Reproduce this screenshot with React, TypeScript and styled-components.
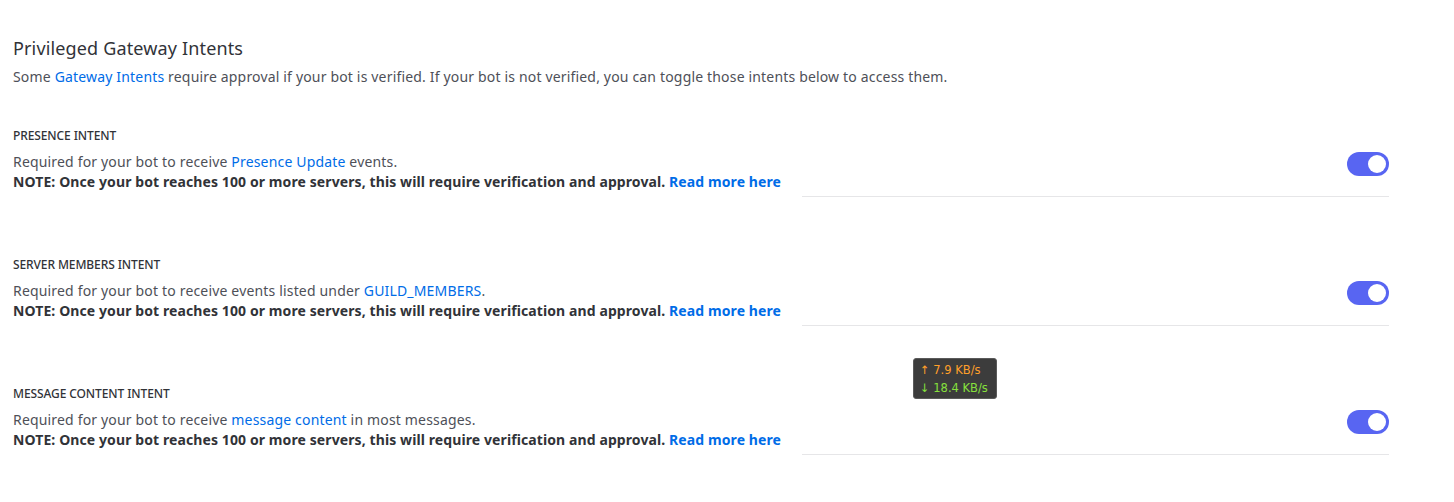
import React from "react";
import styled, { createGlobalStyle } from "styled-components";

const Global = createGlobalStyle`
  html, body { margin: 0; padding: 0; background: #ffffff; }
  body { font-family: "Noto Sans", Roboto, sans-serif; }
`;

const Page = styled.div`
  position: relative;
  width: 1454px;
  height: 502px;
  box-sizing: border-box;
  padding: 36px 65px 0 13px;
`;

const Title = styled.h2`
  margin: 0;
  font-size: 18px;
  line-height: 24px;
  font-weight: 400;
  letter-spacing: 0.15px;
  color: #313338;
`;

const Lead = styled.p`
  margin: 7px 0 0;
  font-size: 14px;
  line-height: 20px;
  letter-spacing: 0.17px;
  color: #4e5058;
`;

const Link = styled.a<{ $bold?: boolean }>`
  color: #006ce7;
  text-decoration: none;
  font-weight: ${(p) => (p.$bold ? 700 : 400)};
`;

const Section = styled.section`
  margin-top: 41px;
  & + & { margin-top: 60px; }
`;

const Label = styled.div`
  font-size: 12px;
  line-height: 16px;
  font-weight: 500;
  letter-spacing: -0.1px;
  color: #313338;
  text-transform: uppercase;
`;

const Row = styled.div`
  display: flex;
  gap: 20px;
  margin-top: 8px;
`;

const TextCol = styled.div`
  flex: 0 0 769px;
  padding-bottom: 5px;
  white-space: nowrap;
`;

const Desc = styled.div`
  font-size: 14px;
  line-height: 20px;
  letter-spacing: 0.17px;
  color: #4e5058;
`;

const Note = styled.div`
  font-size: 14px;
  line-height: 20px;
  font-weight: 700;
  letter-spacing: 0.1px;
  color: #313338;
`;

const Side = styled.div`
  flex: 1;
  display: flex;
  justify-content: flex-end;
  align-items: flex-start;
  border-bottom: 1px solid #e6e6e8;
`;

const Switch = styled.div`
  position: relative;
  width: 42px;
  height: 24px;
  border-radius: 12px;
  background: #5865f2;
  &::after {
    content: "";
    position: absolute;
    top: 3px;
    right: 3px;
    width: 18px;
    height: 18px;
    border-radius: 50%;
    background: #ffffff;
  }
`;

const NetTip = styled.div`
  position: absolute;
  left: 913px;
  top: 358px;
  width: 84px;
  height: 41px;
  box-sizing: border-box;
  padding: 2px 6px;
  background: #3c3c3c;
  border: 1px solid #5a5a5a;
  border-radius: 3px;
  font-family: "DejaVu Sans", sans-serif;
  font-size: 11.5px;
  line-height: 18px;
`;

const Rate = styled.div<{ $c: string }>`
  color: ${(p) => p.$c};
  white-space: nowrap;
`;

const NOTE_TEXT =
  "NOTE: Once your bot reaches 100 or more servers, this will require verification and approval. ";

const intents = [
  {
    label: "Presence Intent",
    before: "Required for your bot to receive ",
    link: "Presence Update",
    after: " events.",
  },
  {
    label: "Server Members Intent",
    before: "Required for your bot to receive events listed under ",
    link: "GUILD_MEMBERS",
    after: ".",
  },
  {
    label: "Message Content Intent",
    before: "Required for your bot to receive ",
    link: "message content",
    after: " in most messages.",
  },
];

export default function App() {
  return (
    <>
      <Global />
      <Page>
        <Title>Privileged Gateway Intents</Title>
        <Lead>
          Some <Link>Gateway Intents</Link> require approval if your bot is verified. If your bot
          is not verified, you can toggle those intents below to access them.
        </Lead>
        {intents.map((it) => (
          <Section key={it.label}>
            <Label>{it.label}</Label>
            <Row>
              <TextCol>
                <Desc>
                  {it.before}
                  <Link>{it.link}</Link>
                  {it.after}
                </Desc>
                <Note>
                  {NOTE_TEXT}
                  <Link $bold>Read more here</Link>
                </Note>
              </TextCol>
              <Side>
                <Switch />
              </Side>
            </Row>
          </Section>
        ))}
        <NetTip>
          <Rate $c="#ff9f2a">↑ 7.9 KB/s</Rate>
          <Rate $c="#86e03c">↓ 18.4 KB/s</Rate>
        </NetTip>
      </Page>
    </>
  );
}
